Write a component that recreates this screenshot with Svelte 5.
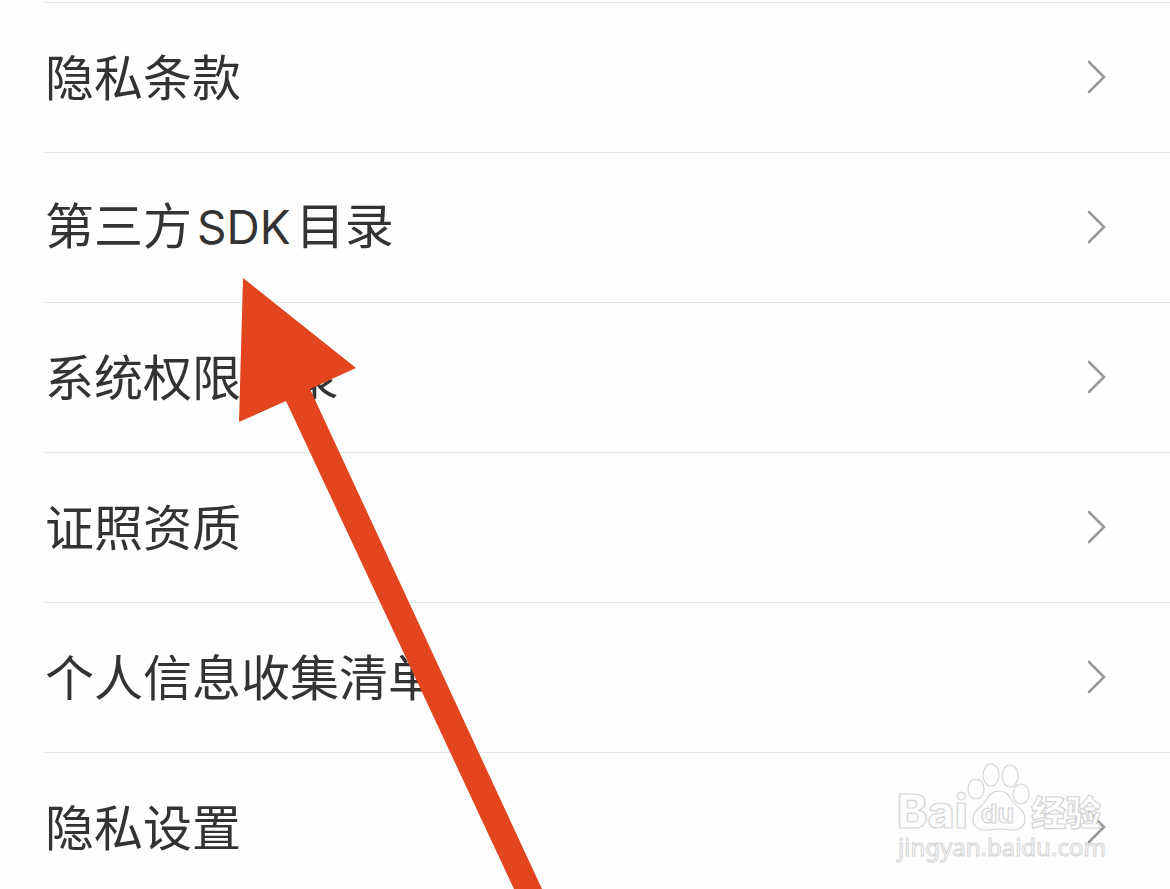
<script>
  const items = [
    { id: 'privacy-terms', label: ['隐私条款'] },
    { id: 'sdk-list', label: ['第三方', 'SDK', '目录'] },
    { id: 'permissions', label: ['系统权限目录'] },
    { id: 'licenses', label: ['证照资质'] },
    { id: 'collected-info', label: ['个人信息收集清单'] },
    { id: 'privacy-settings', label: ['隐私设置'] }
  ];

  function isLatin(text) {
    return /^[A-Za-z]+$/.test(text);
  }
</script>

<main class="page">
  <nav class="list">
    {#each items as item (item.id)}
      <a class="row" href="#{item.id}">
        <span class="label">
          {#each item.label as part}<span class:latin={isLatin(part)}>{part}</span>{/each}
        </span>
        <svg class="chevron" viewBox="0 0 22 38" aria-hidden="true">
          <path d="M3 3 L18 18 L3 33" />
        </svg>
      </a>
    {/each}
  </nav>

  <svg class="watermark" viewBox="0 0 250 139" aria-hidden="true">
    <text class="bai" x="17" y="78">Bai</text>
    <text class="cjk" x="151" y="76">经验</text>
    <ellipse cx="96" cy="39" rx="8" ry="10" />
    <ellipse cx="111" cy="25" rx="8" ry="11" />
    <ellipse cx="130" cy="26" rx="8" ry="11" />
    <ellipse cx="141" cy="44" rx="8" ry="10" />
    <path d="M119 41 C111 41 107 47 104 53 C101 58 93 60 93 69 C93 76 98 80 105 80 C111 80 115 79 119 79 C124 79 128 80 133 80 C140 80 145 76 145 69 C145 60 137 57 133 52 C129 46 127 41 119 41 Z" />
    <text class="du" x="101" y="73">du</text>
    <text class="site" x="18" y="106">jingyan.baidu.com</text>
  </svg>

  <svg class="arrow" viewBox="0 0 304 611" aria-hidden="true">
    <path d="M4 0 L117 90 L71 111 L303 611 L275 611 L47 123 L0 144 Z" />
  </svg>
</main>

<style>
  :global(body) {
    margin: 0;
    background: #fefefe;
  }

  .page {
    position: relative;
    box-sizing: border-box;
    height: 100vh;
    padding-top: 2px;
    overflow: hidden;
    background: #fefefe;
  }

  .list {
    display: flex;
    flex-direction: column;
    margin-left: 45px;
  }

  .row {
    display: flex;
    align-items: center;
    justify-content: space-between;
    box-sizing: border-box;
    height: 150px;
    padding-right: 62px;
    border-top: 1px solid #e4e4e4;
    color: #333;
    text-decoration: none;
  }

  .label {
    padding-bottom: 6px;
    font-family: "Noto Sans CJK SC", sans-serif;
    font-size: 49px;
    line-height: 72px;
    white-space: nowrap;
  }

  .latin {
    margin: 0 5px;
    font-family: Inter, sans-serif;
    font-size: 46px;
  }

  .chevron {
    flex: none;
    width: 22px;
    height: 38px;
    fill: none;
    stroke: #999;
    stroke-width: 2.6;
    stroke-linecap: round;
  }

  .watermark {
    position: absolute;
    right: 40px;
    bottom: 0;
    width: 250px;
    height: 139px;
    fill: #fefefe;
    stroke: #d4d4d4;
    stroke-width: 1.2;
    pointer-events: none;
  }

  .bai {
    font: 800 46px Inter, sans-serif;
  }

  .du {
    font: bold 26px Inter, sans-serif;
  }

  .cjk {
    font: 900 35px "Noto Sans CJK SC", sans-serif;
  }

  .site {
    font: 24px "Noto Sans", sans-serif;
    stroke-width: 1;
  }

  .arrow {
    position: absolute;
    top: 278px;
    left: 239px;
    width: 304px;
    height: 611px;
    fill: #e3451e;
    pointer-events: none;
  }
</style>
